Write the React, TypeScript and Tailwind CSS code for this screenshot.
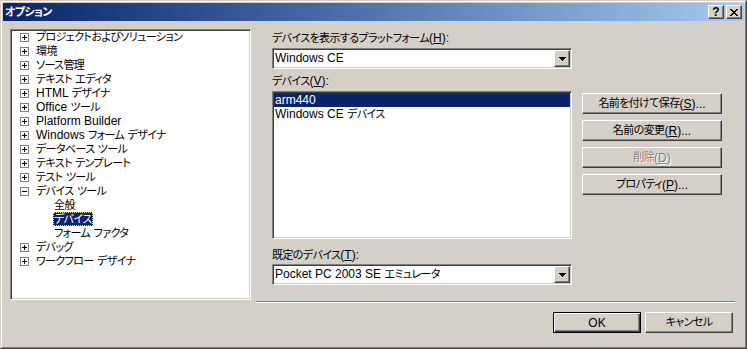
import React from "react";

interface TreeItem {
  label: string;
  level: number;
  box?: "plus" | "minus";
  selected?: boolean;
}

const treeItems: TreeItem[] = [
  { label: "プロジェクトおよびソリューション", level: 0, box: "plus" },
  { label: "環境", level: 0, box: "plus" },
  { label: "ソース管理", level: 0, box: "plus" },
  { label: "テキスト エディタ", level: 0, box: "plus" },
  { label: "HTML デザイナ", level: 0, box: "plus" },
  { label: "Office ツール", level: 0, box: "plus" },
  { label: "Platform Builder", level: 0, box: "plus" },
  { label: "Windows フォーム デザイナ", level: 0, box: "plus" },
  { label: "データベース ツール", level: 0, box: "plus" },
  { label: "テキスト テンプレート", level: 0, box: "plus" },
  { label: "テスト ツール", level: 0, box: "plus" },
  { label: "デバイス ツール", level: 0, box: "minus" },
  { label: "全般", level: 1 },
  { label: "デバイス", level: 1, selected: true },
  { label: "フォーム ファクタ", level: 1 },
  { label: "デバッグ", level: 0, box: "plus" },
  { label: "ワークフロー デザイナ", level: 0, box: "plus" },
];

// MS UI Gothic kana are narrower than Noto's, so Japanese runs get squeezed a bit
const jp = (s: string) =>
  s.split(/([\u3000-\u30ff\u3400-\u9fff\uff00-\uffef]+)/).map((part, i) =>
    i % 2 === 1 ? (
      <span key={i} className="text-[11px] tracking-[-0.6px]">
        {part}
      </span>
    ) : (
      part
    )
  );

const raised =
  "border border-t-white border-l-white border-r-[#404040] border-b-[#404040] shadow-[inset_-1px_-1px_0_#808080]";
const sunken =
  "border border-t-[#808080] border-l-[#808080] border-r-white border-b-white shadow-[inset_1px_1px_0_#404040,inset_-1px_-1px_0_#d4d0c8]";

const ExpandBox: React.FC<{ kind: "plus" | "minus" }> = ({ kind }) => (
  <svg width="9" height="9" viewBox="0 0 9 9" className="shrink-0" shapeRendering="crispEdges">
    <rect x="0.5" y="0.5" width="8" height="8" fill="#fff" stroke="#808080" />
    <line x1="2" y1="4.5" x2="7" y2="4.5" stroke="#000" />
    {kind === "plus" && <line x1="4.5" y1="2" x2="4.5" y2="7" stroke="#000" />}
  </svg>
);

const Arrow: React.FC = () => (
  <svg width="7" height="4" viewBox="0 0 7 4" shapeRendering="crispEdges">
    <path d="M0 0h7v1h-1v1h-1v1h-1v1h-1v-1h-1v-1h-1v-1h-1z" fill="#000" />
  </svg>
);

const ComboBox: React.FC<{ value: string }> = ({ value }) => (
  <div className={`h-[21px] p-px bg-white flex ${sunken}`}>
    <div className="flex-1 pl-[1px] leading-[17px] whitespace-nowrap">{jp(value)}</div>
    <div className={`w-[16px] h-full bg-[#d4d0c8] flex items-center justify-center ${raised}`}>
      <Arrow />
    </div>
  </div>
);

const Button: React.FC<{ children: React.ReactNode; disabled?: boolean; className?: string }> = ({
  children,
  disabled,
  className = "",
}) => (
  <div
    className={`h-[21px] flex items-center justify-center whitespace-nowrap bg-[#d4d0c8] ${raised} ${
      disabled ? "text-[#808080] [text-shadow:1px_1px_0_#fff]" : ""
    } ${className}`}
  >
    {children}
  </div>
);

const App: React.FC = () => {
  return (
    <div className="w-[747px] h-[349px] bg-[#d4d0c8] border border-t-[#d4d0c8] border-l-[#d4d0c8] border-r-[#404040] border-b-[#404040] text-[12px] text-black font-['Liberation_Sans','Noto_Sans_CJK_JP',sans-serif] [font-feature-settings:'palt'] select-none">
      <div className="h-full p-px border border-t-white border-l-white border-r-[#808080] border-b-[#808080] flex flex-col">
        {/* title bar */}
        <div className="h-[18px] shrink-0 flex items-center bg-linear-to-r from-[#0a246a] to-[#a6caf0] pl-[2px] pr-[2px]">
          <span className="text-white font-bold leading-[18px]">{jp("オプション")}</span>
          <div className="ml-auto flex gap-[2px]">
            <div className={`w-[16px] h-[14px] bg-[#d4d0c8] flex items-center justify-center font-bold text-[12px] leading-none font-['Liberation_Sans',sans-serif] ${raised}`}>
              ?
            </div>
            <div className={`w-[16px] h-[14px] bg-[#d4d0c8] flex items-center justify-center ${raised}`}>
              <svg width="8" height="7" viewBox="0 0 8 7" shapeRendering="crispEdges">
                <path
                  d="M0 0h2v1h1v1h2v-1h1v-1h2v1h-1v1h-1v1h-1v1h1v1h1v1h1v1h-2v-1h-1v-1h-2v1h-1v1h-2v-1h1v-1h1v-1h1v-1h-1v-1h-1v-1h-1z"
                  fill="#000"
                />
              </svg>
            </div>
          </div>
        </div>

        {/* body */}
        <div className="flex-1 flex flex-col pl-[7px] pt-[8px]">
          <div className="flex items-start">
            {/* tree */}
            <div className={`w-[241px] h-[271px] bg-white p-px overflow-hidden ${sunken}`}>
              <div className="-mt-px">
                {treeItems.map((item) => (
                  <div
                    key={item.label}
                    className={`h-[14px] flex items-center whitespace-nowrap ${
                      item.level === 0 ? "pl-[8px]" : "pl-[41px]"
                    }`}
                  >
                    {item.box && <ExpandBox kind={item.box} />}
                    <span
                      className={`leading-[14px] px-px ${item.box ? "ml-[6px]" : ""} ${
                        item.selected
                          ? "bg-[#0a246a] text-white outline outline-1 outline-dotted outline-[#f5e08a] -outline-offset-1"
                          : ""
                      }`}
                    >
                      {jp(item.label)}
                    </span>
                  </div>
                ))}
              </div>
            </div>

            {/* right side */}
            <div className="w-[479px] h-[274px] ml-[5px] flex flex-col">
              <div className="flex pl-[16px] pt-[2px]">
                <div className="w-[300px] flex flex-col">
                  <div className="h-[14px] leading-[14px] whitespace-nowrap">
                    {jp("デバイスを表示するプラットフォーム(")}
                    <u>H</u>):
                  </div>
                  <div className="mt-[3px]">
                    <ComboBox value="Windows CE" />
                  </div>
                  <div className="mt-[5px] h-[14px] leading-[14px]">
                    {jp("デバイス(")}
                    <u>V</u>):
                  </div>
                  <div className={`mt-[3px] h-[148px] p-px bg-white ${sunken}`}>
                    <div className="h-[14px] leading-[14px] pl-[1px] bg-[#0a246a] text-white">arm440</div>
                    <div className="h-[14px] leading-[14px] pl-[1px]">{jp("Windows CE デバイス")}</div>
                  </div>
                  <div className="mt-[9px] h-[14px] leading-[14px]">
                    {jp("既定のデバイス(")}
                    <u>T</u>):
                  </div>
                  <div className="mt-[2px]">
                    <ComboBox value="Pocket PC 2003 SE エミュレータ" />
                  </div>
                </div>

                <div className="w-[140px] ml-[10px] mt-[62px] flex flex-col gap-[6px]">
                  <Button>
                    {jp("名前を付けて保存(")}
                    <u>S</u>)...
                  </Button>
                  <Button>
                    {jp("名前の変更(")}
                    <u>R</u>)...
                  </Button>
                  <Button disabled>
                    {jp("削除(")}
                    <u>D</u>)
                  </Button>
                  <Button>
                    {jp("プロパティ(")}
                    <u>P</u>)...
                  </Button>
                </div>
              </div>

              <div className="mt-auto h-[2px] border-t border-t-[#808080] border-b border-b-white" />
            </div>
          </div>

          {/* OK / Cancel */}
          <div className="flex justify-end gap-[4px] mt-[9px] pr-[11px]">
            <div className="w-[88px] h-[21px] flex items-center justify-center bg-[#d4d0c8] border border-black shadow-[inset_1px_1px_0_#fff,inset_-1px_-1px_0_#404040,inset_-2px_-2px_0_#808080]">
              OK
            </div>
            <Button className="w-[88px]">{jp("キャンセル")}</Button>
          </div>
        </div>
      </div>
    </div>
  );
};

export default App;
